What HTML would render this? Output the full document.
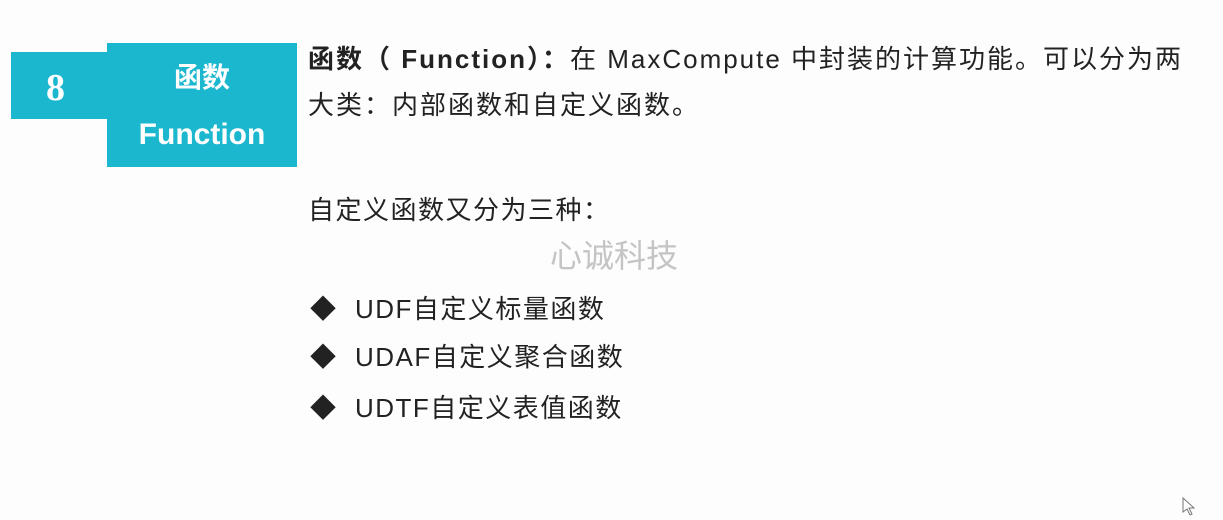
<!DOCTYPE html>
<html><head><meta charset="utf-8"><style>
body{margin:0;width:1223px;height:520px;background:#fdfdfd;position:relative;overflow:hidden;font-family:"Liberation Sans","Noto Sans CJK SC",sans-serif;color:#222}
.a{position:absolute}
.t{font-size:26px;white-space:nowrap;line-height:1;letter-spacing:1.5px}
</style></head><body>
<div class="a" style="left:11px;top:52px;width:98px;height:67px;background:#1bb7cf"></div>
<div class="a" style="left:107px;top:43px;width:190px;height:124px;background:#1bb7cf"></div>
<div class="a" style="left:46px;top:66px;color:#fff;font:bold 38px 'Liberation Serif',serif">8</div>
<div class="a" style="left:107px;width:190px;top:64px;text-align:center;color:#fff;font-size:28px;font-weight:bold;line-height:1">函数</div>
<div class="a" style="left:107px;width:190px;top:120px;text-align:center;color:#fff;font-size:30px;font-weight:bold;line-height:1">Function</div>
<div class="a t" style="left:308px;top:46px;letter-spacing:2px"><b>函数（ Function）：</b>在 MaxCompute 中封装的计算功能。可以分为两</div>
<div class="a t" style="left:308px;top:92px;letter-spacing:2px">大类：内部函数和自定义函数。</div>
<div class="a t" style="left:308px;top:197px">自定义函数又分为三种：</div>
<div class="a" style="left:550px;top:240px;font-size:32px;color:#c4c4c4;line-height:1">心诚科技</div>
<div class="a t" style="left:310px;top:296px">◆&nbsp;&nbsp;UDF自定义标量函数</div>
<div class="a t" style="left:310px;top:344px">◆&nbsp;&nbsp;UDAF自定义聚合函数</div>
<div class="a t" style="left:310px;top:395px">◆&nbsp;&nbsp;UDTF自定义表值函数</div>
<svg class="a" style="left:1181px;top:497px" width="16" height="20"><path d="M2 1 L2 15 L6 12 L9 18 L11 17 L8 11 L13 11 Z" fill="#fff" stroke="#777"/></svg>
</body></html>
